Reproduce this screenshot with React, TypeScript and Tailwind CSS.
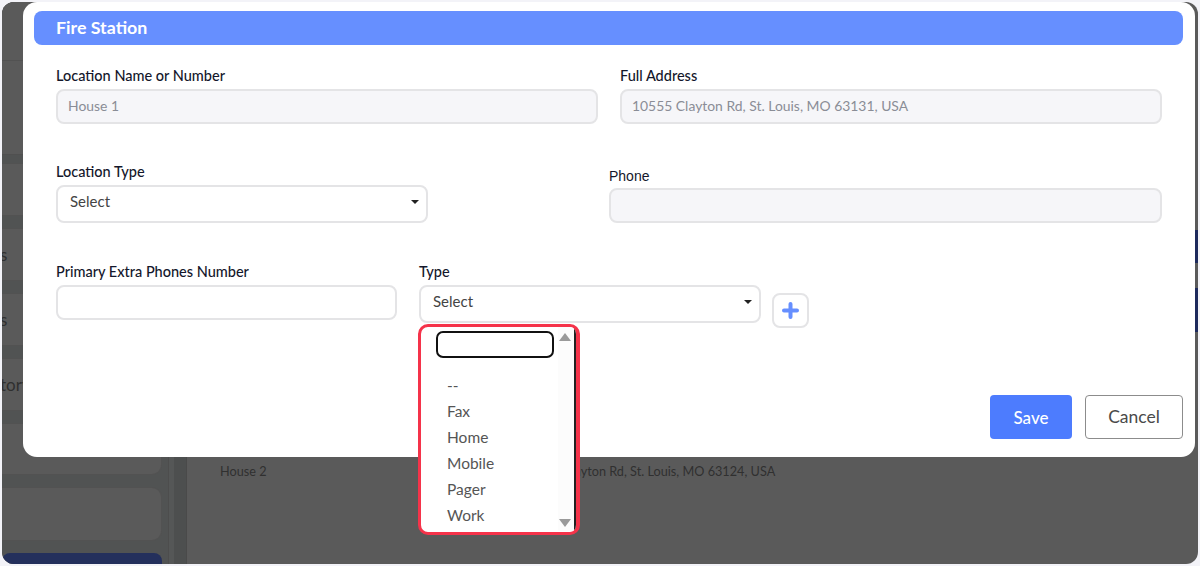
import React from 'react';

const labelCls = 'block text-[14.5px] leading-[17px] font-medium text-[#14172b]';
const fieldCls = 'rounded-[8px] border-2 border-[#e4e4e6]';

const Caret = () => (
  <span className="w-0 h-0 border-x-[4px] border-x-transparent border-t-[4px] border-t-[#222]" />
);

const SelectBox = ({ width, height }: { width: string; height: string }) => (
  <div className={`${width} ${height} ${fieldCls} bg-white flex items-center justify-between pl-[12px] pr-[7px] pb-[5px] text-[15px] text-[#444]`}>
    <span>Select</span>
    <Caret />
  </div>
);

const SideCard = ({ height, label }: { height: string; label?: string }) => (
  <div className={`${height} rounded-r-[10px] border border-[#525252] border-l-0 bg-[#5a5a5a] flex items-center overflow-hidden text-[#2f2f2f] text-[17px] shrink-0 whitespace-nowrap`}>
    <span className="-ml-[2px]">{label}</span>
  </div>
);

const OPTIONS = ['--', 'Fax', 'Home', 'Mobile', 'Pager', 'Work'];

export default function App() {
  return (
    <div className="w-[1200px] h-[566px] overflow-hidden bg-[#f3f3f8] p-[2px] pr-[2px] relative" style={{ fontFamily: 'Lato, sans-serif' }}>
      {/* page behind the dialog */}
      <div className="h-full rounded-[12px] bg-[#5a5a5a] overflow-hidden flex">
        <div className="w-[166px] bg-[#515353] shrink-0 flex flex-col">
          <div className="h-[153px] bg-[#5a5a5a] border-b border-[#505050] pt-[58px] shrink-0">
            <div className="border-t border-[#525252]" />
          </div>
          <div className="h-[8px] shrink-0" />
          <div className="flex flex-col gap-[12px] w-[160px]">
            <SideCard height="h-[53px]" />
            <SideCard height="h-[53px]" label="s" />
            <SideCard height="h-[53px]" label="s" />
            <SideCard height="h-[53px]" label="tory" />
            <SideCard height="h-[52px]" />
            <SideCard height="h-[54px]" />
            <div className="h-[30px] rounded-t-[8px] bg-[#24305c] shrink-0" />
          </div>
        </div>
        <div className="w-[6px] bg-[#555757] border-l border-[#4d4d4d] shrink-0" />
        <div className="w-[12px] bg-[#4d4f4f] shrink-0" />
        <div className="flex-1 border-l border-[#4a4a4a] pt-[460px] pl-[33px] text-[12.7px] text-[#303030] flex">
          <span className="w-[303px]">House 2</span>
          <span>10555 Clayton Rd, St. Louis, MO 63124, USA</span>
        </div>
      </div>

      {/* navy stripes at the right edge */}
      <div className="absolute left-[1195px] top-[230px] w-[3px] h-[33px] bg-[#1d2a5c]" />
      <div className="absolute left-[1195px] top-[288px] w-[3px] h-[44px] bg-[#1d2a5c]" />

      {/* dialog */}
      <div className="absolute left-[23px] top-[2px] w-[1172px] h-[455px] bg-white rounded-[14px] pt-[9px] px-[11px]">
        <div className="h-[34px] w-[1149px] rounded-[8px] bg-[#668fff] pl-[22px] pb-[1px] flex items-center text-[17.8px] font-bold text-white">
          Fire Station
        </div>

        <div className="flex pl-[22px] pt-[22px]">
          <div className="w-[542px]">
            <label className={labelCls}>Location Name or Number</label>
            <div className={`${fieldCls} mt-[5px] h-[35px] bg-[#f6f6f9] flex items-center pl-[10px] pb-[1px] text-[13.9px] text-[#8a8d96]`}>House 1</div>
          </div>
          <div className="w-[542px] ml-[22px]">
            <label className={labelCls}>Full Address</label>
            <div className={`${fieldCls} mt-[5px] h-[35px] bg-[#f6f6f9] flex items-center pl-[10px] pb-[1px] text-[13.9px] text-[#8a8d96]`}>10555 Clayton Rd, St. Louis, MO 63131, USA</div>
          </div>
        </div>

        <div className="flex pl-[22px] pt-[39px]">
          <div className="w-[372px]">
            <label className={labelCls}>Location Type</label>
            <div className="mt-[5px]"><SelectBox width="w-[372px]" height="h-[38px]" /></div>
          </div>
          <div className="w-[553px] ml-[181px] pt-[3px]">
            <label className="block text-[14px] leading-[17px] font-medium text-[#14172b] relative top-[2px]" style={{ fontFamily: '"Liberation Sans", sans-serif' }}>Phone</label>
            <div className={`${fieldCls} mt-[5px] h-[35px] bg-[#f6f6f9]`} />
          </div>
        </div>

        <div className="flex pl-[22px] pt-[40px]">
          <div className="w-[342px]">
            <label className={labelCls}>Primary Extra Phones Number</label>
            <div className={`${fieldCls} mt-[5px] h-[35px] w-[341px] bg-white`} />
          </div>
          <div className="ml-[22px] w-[342px] -translate-x-[1px]">
            <label className={labelCls}>Type</label>
            <div className="mt-[5px]"><SelectBox width="w-[342px]" height="h-[38px]" /></div>
          </div>
          <div className={`${fieldCls} ml-[10px] mt-[30px] w-[37px] h-[35px] bg-white flex items-center justify-center`}>
            <svg width="17" height="17" viewBox="0 0 17 17">
              <path d="M8.5 2v13M2 8.5h13" stroke="#668fff" strokeWidth="4" strokeLinecap="round" />
            </svg>
          </div>
        </div>

        <div className="flex justify-end gap-[13px] w-[1149px] pt-[67px]">
          <button className="w-[82px] h-[44px] rounded-[4px] bg-[#4d7cfe] pt-[1px] text-white text-[17px] font-medium">Save</button>
          <button className="w-[98px] h-[44px] rounded-[4px] border border-[#8c8c8c] bg-white pt-[1px] text-[#4a4a4a] text-[17.5px]">Cancel</button>
        </div>
      </div>

      {/* open dropdown */}
      <div className="absolute left-[418px] top-[324px] w-[162px] h-[211px] rounded-[10px] border-[3px] border-r-[4px] border-[#f5334a] bg-white overflow-hidden flex">
        <div className="flex-1 border-r-2 border-[#222]">
          <div className="flex">
            <div className="flex-1 pl-[15px] pt-[4px]">
              <div className="w-[118px] h-[27px] rounded-[7px] border-2 border-[#111] bg-white" />
            </div>
            <div className="w-[16px] bg-[#fcfcfc] h-[204px] flex flex-col items-center justify-between pt-[6px] pb-[4px] pr-[2px] shrink-0">
              <span className="w-0 h-0 border-x-[6px] border-x-transparent border-b-[8px] border-b-[#9a9a9a]" />
              <span className="w-0 h-0 border-x-[6px] border-x-transparent border-t-[8px] border-t-[#9a9a9a]" />
            </div>
          </div>
        </div>
      </div>
      <ul className="absolute left-[447px] top-[372px] text-[15.5px] leading-[26px] text-[#555]">
        {OPTIONS.map(o => <li key={o}>{o}</li>)}
      </ul>
    </div>
  );
}
